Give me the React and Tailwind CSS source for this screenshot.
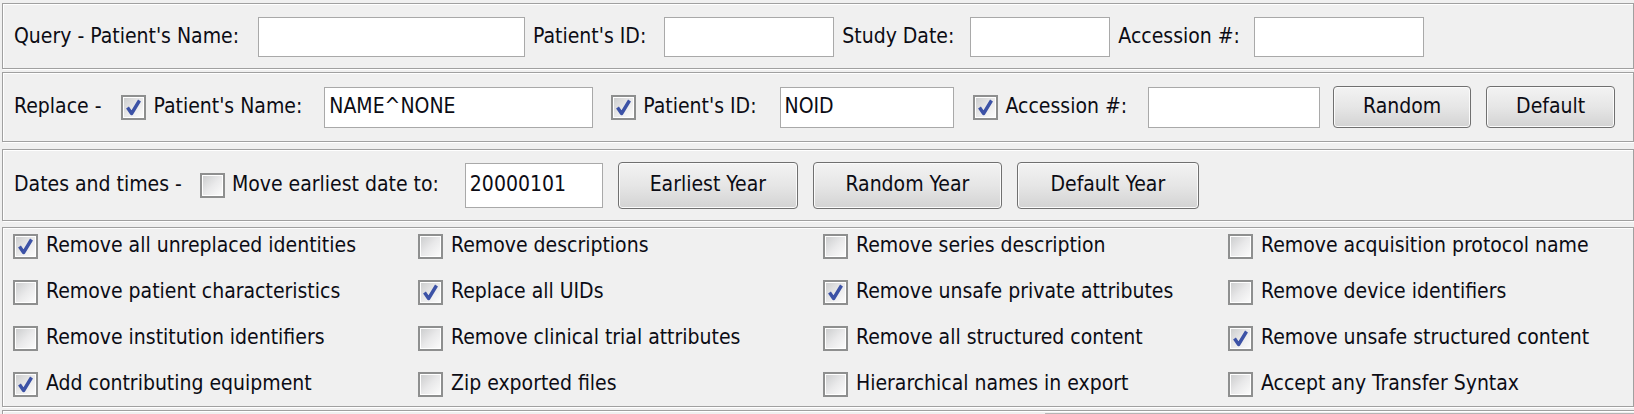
import React from 'react';

const FONT = "font-['DejaVu_Sans_Condensed','DejaVu_Sans',sans-serif] text-[21px] text-[#0c0c14]";

const OPTIONS = [
  ['Remove all unreplaced identities', true],
  ['Remove descriptions', false],
  ['Remove series description', false],
  ['Remove acquisition protocol name', false],
  ['Remove patient characteristics', false],
  ['Replace all UIDs', true],
  ['Remove unsafe private attributes', true],
  ['Remove device identifiers', false],
  ['Remove institution identifiers', false],
  ['Remove clinical trial attributes', false],
  ['Remove all structured content', false],
  ['Remove unsafe structured content', true],
  ['Add contributing equipment', true],
  ['Zip exported files', false],
  ['Hierarchical names in export', false],
  ['Accept any Transfer Syntax', false],
];

function Panel({ className, children }) {
  return (
    <div className={`border border-[#a0a0a0] shadow-[inset_1px_1px_0_#ffffff,1px_1px_0_#ffffff] ${className}`}>
      {children}
    </div>
  );
}

function Check({ on, className = '' }) {
  return (
    <span className={`relative inline-flex w-[25px] h-[25px] shrink-0 border-2 border-[#8e8f8f] bg-white p-[1px] ${className}`}>
      <span className="flex-1 bg-linear-to-br from-[#cdcecf] via-[#e9e9ea] to-[#fbfbfb]" />
      {on && (
        <svg className="absolute inset-0" viewBox="0 0 21 21" width="21" height="21">
          <path d="M4.5 10.5 L8.6 16.5 L16.5 3.5" fill="none" stroke="#3c52a6" strokeWidth="3.4" strokeLinejoin="round" />
        </svg>
      )}
    </span>
  );
}

function Field({ value = '', className = '' }) {
  return (
    <div className={`h-[40px] shrink-0 border border-[#a9a9a9] bg-white flex items-center px-[4px] ${className}`}>
      {value}
    </div>
  );
}

function Btn({ children, className = '' }) {
  return (
    <div className={`h-[42px] shrink-0 rounded-[4px] border border-[#707070] bg-linear-to-b from-[#f3f3f3] via-[#e6e6e6] to-[#d3d3d3] shadow-[inset_0_0_0_1px_#fbfbfb] flex items-center justify-center ${className}`}>
      {children}
    </div>
  );
}

export default function App() {
  return (
    <div className={`w-[1634px] h-[414px] overflow-hidden bg-[#f0f0f0] flex ${FONT}`}>
      <div className="flex-1 flex flex-col pl-[2px] pr-[2px] pt-[3px]">

        {/* Query */}
        <Panel className="h-[66px] flex items-center pl-[11px] pt-[1px]">
          <span>Query - Patient's Name:</span>
          <Field className="ml-[19px] w-[267px]" />
          <span className="ml-[8px]">Patient's ID:</span>
          <Field className="ml-[18px] w-[170px]" />
          <span className="ml-[8px]">Study Date:</span>
          <Field className="ml-[16px] w-[140px]" />
          <span className="ml-[8px]">Accession #:</span>
          <Field className="ml-[14px] w-[170px]" />
        </Panel>

        {/* Replace */}
        <Panel className="mt-[3px] h-[70px] flex items-center pl-[11px]">
          <span>Replace -</span>
          <Check on className="ml-[20px]" />
          <span className="ml-[7px]">Patient's Name:</span>
          <Field value="NAME^NONE" className="ml-[22px] w-[269px] h-[41px]" />
          <Check on className="ml-[18px]" />
          <span className="ml-[7px]">Patient's ID:</span>
          <Field value="NOID" className="ml-[23px] w-[174px] h-[41px]" />
          <Check on className="ml-[19px]" />
          <span className="ml-[8px]">Accession #:</span>
          <Field className="ml-[21px] w-[172px] h-[41px]" />
          <Btn className="ml-[13px] w-[138px]">Random</Btn>
          <Btn className="ml-[15px] w-[129px]">Default</Btn>
        </Panel>

        {/* Dates */}
        <Panel className="mt-[7px] h-[72px] flex items-center pl-[11px]">
          <span>Dates and times -</span>
          <Check className="ml-[18px]" />
          <span className="ml-[7px]">Move earliest date to:</span>
          <Field value="20000101" className="ml-[26px] w-[138px] h-[45px]" />
          <Btn className="ml-[15px] w-[180px] h-[47px]">Earliest Year</Btn>
          <Btn className="ml-[15px] w-[189px] h-[47px]">Random Year</Btn>
          <Btn className="ml-[15px] w-[182px] h-[47px]">Default Year</Btn>
        </Panel>

        {/* Options */}
        <Panel className="mt-[6px] h-[180px] pl-[10px] pt-[4px]">
          <div className="grid grid-cols-[repeat(4,405px)] gap-y-[18px]">
            {OPTIONS.map(([label, on]) => (
              <div key={label} className="h-[28px] flex items-center gap-[8px]">
                <Check on={on} />
                <span className="whitespace-nowrap">{label}</span>
              </div>
            ))}
          </div>
        </Panel>

        <div className="mt-[3px] flex-1 flex border-t border-l border-[#a0a0a0] shadow-[inset_1px_1px_0_#ffffff]">
          <div className="w-[1042px]" />
          <div className="flex-1 mt-[2px] rounded-tl-[4px] border-t border-l border-[#b5b5b5] bg-[#f4f4f4]" />
        </div>
      </div>
      <div className="w-[3px] bg-[#2c4260]" />
    </div>
  );
}
